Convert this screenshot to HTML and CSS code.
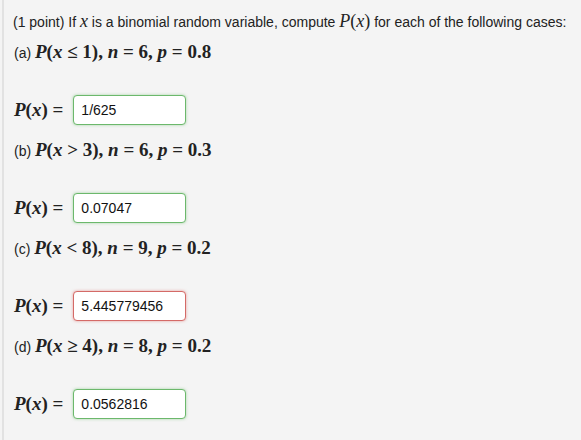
FILE: index.html
```html
<!DOCTYPE html>
<html>
<head>
<meta charset="utf-8">
<link rel="stylesheet" href="styles.css">
</head>
<body>
<div class="problem">
  <p class="intro">(1 point) If <span class="m"><i>x</i></span> is a binomial random variable, compute <span class="m"><i>P</i>(<i>x</i>)</span> for each of the following cases:</p>

  <div class="part">
    <p class="case">(a) <span class="m big"><i>P</i>(<i>x</i> ≤ 1), <i>n</i> = 6, <i>p</i> = 0.8</span></p>
    <div class="answer"><span class="m big"><i>P</i>(<i>x</i>) =</span><span class="box ok">1/625</span></div>
  </div>

  <div class="part">
    <p class="case">(b) <span class="m big"><i>P</i>(<i>x</i> &gt; 3), <i>n</i> = 6, <i>p</i> = 0.3</span></p>
    <div class="answer"><span class="m big"><i>P</i>(<i>x</i>) =</span><span class="box ok">0.07047</span></div>
  </div>

  <div class="part">
    <p class="case">(c) <span class="m big"><i>P</i>(<i>x</i> &lt; 8), <i>n</i> = 9, <i>p</i> = 0.2</span></p>
    <div class="answer"><span class="m big"><i>P</i>(<i>x</i>) =</span><span class="box bad">5.445779456</span></div>
  </div>

  <div class="part">
    <p class="case">(d) <span class="m big"><i>P</i>(<i>x</i> ≥ 4), <i>n</i> = 8, <i>p</i> = 0.2</span></p>
    <div class="answer"><span class="m big"><i>P</i>(<i>x</i>) =</span><span class="box ok">0.0562816</span></div>
  </div>
</div>
</body>
</html>
```

FILE: styles.css
```css
html, body {
  margin: 0;
  padding: 0;
  background: #f4f4f4;
  height: 100%;
}
body {
  font-family: "Liberation Sans", Arial, sans-serif;
  font-size: 14px;
  color: #222;
}
.problem {
  margin-left: 2px;
  border-left: 2px solid #e2e2e2;
  padding: 12px 0 0 9px;
  min-height: 428px;
}
.intro {
  margin: 0;
  line-height: 18px;
}
.m {
  font-family: "Liberation Serif", "Times New Roman", serif;
  font-size: 18px;
}
.m i { font-style: italic; }
.big { font-size: 19px; font-weight: bold; }
.case {
  margin: 10px 0 0 1px;
  line-height: 22px;
}
.answer {
  display: flex;
  align-items: center;
  gap: 10px;
  margin-top: 31px;
  margin-left: 1px;
}
.box {
  box-sizing: border-box;
  width: 113px;
  height: 30px;
  background: #fff;
  border: 1px solid #6cb86c;
  border-radius: 4px;
  box-shadow: 0 0 3px rgba(92, 184, 92, 0.55);
  padding: 0 7px;
  line-height: 28px;
  font-family: "Liberation Sans", Arial, sans-serif;
  font-size: 14px;
  color: #111;
}
.box.bad {
  border-color: #d46a67;
  box-shadow: 0 0 3px rgba(217, 83, 79, 0.55);
}
.part + .part .case { margin-top: 14px; }
.part + .part .answer { margin-top: 31px; }
```
